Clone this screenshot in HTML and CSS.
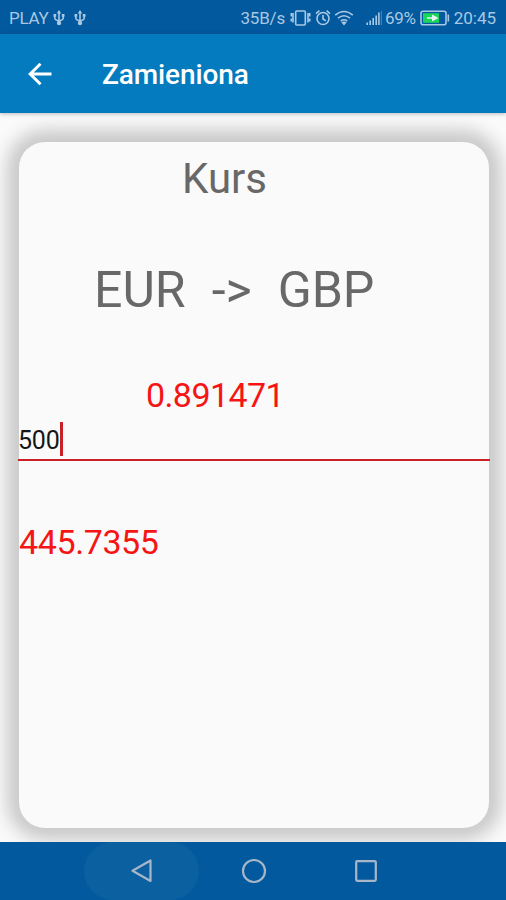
FILE: index.html
```html
<!DOCTYPE html>
<html lang="pl">
<head>
<meta charset="utf-8">
<title>Zamieniona</title>
<link rel="stylesheet" href="styles.css">
</head>
<body>
<div class="screen">
  <header class="status">
    <span class="carrier">PLAY</span>
    <svg class="usb" width="12" height="18" viewBox="0 0 12 18"><path d="M6 2v12M1.800 6v3q0 2.200 4.200 2.800 4.200-.6 4.200-2.800v-3"/><path class="fill" d="M6 1l2.200 3.500H3.800zM.5 5h2.700v2.700H.5zM8.800 5h2.700v2.700H8.800z"/><circle class="fill" cx="6" cy="14" r="2.200"/></svg>
    <svg class="usb second" width="12" height="18" viewBox="0 0 12 18"><path d="M6 2v12M1.800 6v3q0 2.200 4.200 2.800 4.200-.6 4.200-2.800v-3"/><path class="fill" d="M6 1l2.200 3.500H3.800zM.5 5h2.700v2.700H.5zM8.800 5h2.700v2.700H8.800z"/><circle class="fill" cx="6" cy="14" r="2.200"/></svg>
    <span class="speed">35B/s</span>
    <svg class="vibrate" width="21" height="18" viewBox="0 0 21 18"><rect x="5.700" y="2" width="9.600" height="14" rx="1"/><path d="M3 4v9.500M18 4v9.500M1.300 4v3.500M1.300 9.500v3M19.700 4v3.500M19.700 9.500v3"/></svg>
    <svg class="alarm" width="16" height="18" viewBox="0 0 16 18"><circle cx="8" cy="9.500" r="6"/><path d="M8 6v4l2.800 1.700M1 4.600l3.400-3M15 4.600l-3.400-3"/></svg>
    <svg class="wifi" width="20" height="18" viewBox="0 0 20 18"><path d="M1.200 6.200Q10-1.200 18.800 6.200M4 9.200q6-4.800 12 0M6.800 12q3.200-2.400 6.400 0"/><path class="fill" d="M7.300 13.200q2.700-1.500 5.400 0L10 16.500z"/></svg>
    <svg class="signal" width="16" height="18" viewBox="0 0 16 18"><path d="M1.200 13.500v2.500M4.200 11.500v4.500M7.200 9v7M10.200 6.500v9.500M12.900 3.500v12.500"/><path class="faint" d="M15.600 2v14"/></svg>
    <span class="percent">69%</span>
    <svg class="battery" width="30" height="18" viewBox="0 0 30 18"><rect x="1" y="2.200" width="25" height="13.600" rx="2"/><path d="M28.300 5.500v7"/><path class="charge" d="M3 4.200h16v9.600H3z"/><path class="bolt" d="M7 8.300h5V5.500L18.500 9 12 12.500V9.800H7z"/></svg>
    <span class="clock">20:45</span>
  </header>
  <div class="appbar">
    <svg class="back" width="24" height="24" viewBox="0 0 24 24"><path d="M23.500 12H3M12.500 1.800L2.200 12l10.300 10.200"/></svg>
    <h1>Zamieniona</h1>
  </div>
  <main>
    <section class="card">
      <h2>Kurs</h2>
      <div class="pair"><span>EUR</span><span class="arrow">-&gt;</span><span>GBP</span></div>
      <div class="rate">0.891471</div>
      <div class="field"><span>500</span><i class="caret"></i></div>
      <div class="result">445.7355</div>
    </section>
  </main>
  <nav>
    <span class="pressed"><svg width="24" height="26" viewBox="0 0 24 26"><path d="M20.500 2.500v20.500L2.500 12.800z"/></svg></span>
    <svg class="home" width="26" height="26" viewBox="0 0 26 26"><circle cx="13" cy="13" r="11"/></svg>
    <svg class="recent" width="24" height="24" viewBox="0 0 24 24"><rect x="2.200" y="2.200" width="19.600" height="19.600" rx="1"/></svg>
  </nav>
</div>
</body>
</html>
```
FILE: styles.css
```css
* { box-sizing: border-box; }
body { margin: 0; font-family: Roboto, sans-serif; }
.screen { width: 506px; height: 900px; display: flex; flex-direction: column; overflow: hidden; background: #fafafa; }
svg { display: block; flex: none; fill: none; stroke: currentColor; }
.status { height: 34px; flex: none; display: flex; align-items: center; padding: 1px 10px 0 9px; background: #03599e; color: #a9c8e3; font-size: 17px; line-height: 34px; white-space: nowrap; }
.status svg { stroke-width: 1.6; }
.status .fill { fill: currentColor; stroke: none; }
.carrier { width: 44px; letter-spacing: -.3px; }
.usb.second { margin-left: 9px; }
.speed { margin-left: auto; letter-spacing: -.2px; }
.vibrate { margin-left: 5px; }
.alarm { margin-left: 4px; }
.wifi { margin-left: 3px; }
.signal { margin-left: 12px; }
.signal .faint { opacity: .35; }
.percent { margin-left: 3px; letter-spacing: -.3px; }
.battery { margin-left: 4px; }
.battery .charge { fill: #19d65b; stroke: none; }
.battery .bolt { fill: #e2f7ef; stroke: none; }
.clock { margin-left: 4px; }
.appbar { position: relative; z-index: 1; height: 79px; flex: none; display: flex; align-items: center; padding-left: 28px; background: #037bbe; color: #fff; box-shadow: 0 1px 4px rgba(0, 0, 0, .25); }
.back { stroke-width: 3; }
h1 { margin: 2px 0 0 50px; font-size: 28px; font-weight: 500; line-height: 36px; letter-spacing: -.1px; }
main { flex: 1; padding: 29px 17px 14px 19px; }
.card { height: 686px; border-radius: 26px; background: #fafafa; padding-top: 12px; box-shadow: 0 0 18px 12px rgba(0, 0, 0, .2); }
h2 { margin: 0 0 0 163px; font-size: 42px; font-weight: 400; line-height: 50px; color: #686868; }
.pair { display: flex; margin: 56px 0 0 75px; font-size: 50px; line-height: 60px; color: #686868; }
.arrow { margin: 0 26px; }
.rate { margin: 55px 0 0 127px; font-size: 34px; line-height: 40px; letter-spacing: -.6px; color: #f61414; }
.field { display: flex; height: 40px; margin: 6px -1px 0; border-bottom: 2px solid #cc2027; font-size: 25px; line-height: 40px; letter-spacing: -.2px; color: #161616; }
.caret { width: 3px; height: 34px; margin-top: 1px; background: #cc2027; }
.result { margin-top: 61px; font-size: 34px; line-height: 40px; letter-spacing: -.4px; color: #f61414; }
nav { position: relative; z-index: 1; height: 58px; flex: none; display: flex; align-items: center; background: #03599e; color: #a9b6ca; }
nav svg { stroke-width: 2.2; stroke-linejoin: round; }
.pressed { display: flex; align-items: center; justify-content: center; width: 115px; height: 58px; margin-left: 84px; border-radius: 29px; background: #0b609f; }
.home { margin-left: 42px; }
.recent { margin-left: 87px; }
```
